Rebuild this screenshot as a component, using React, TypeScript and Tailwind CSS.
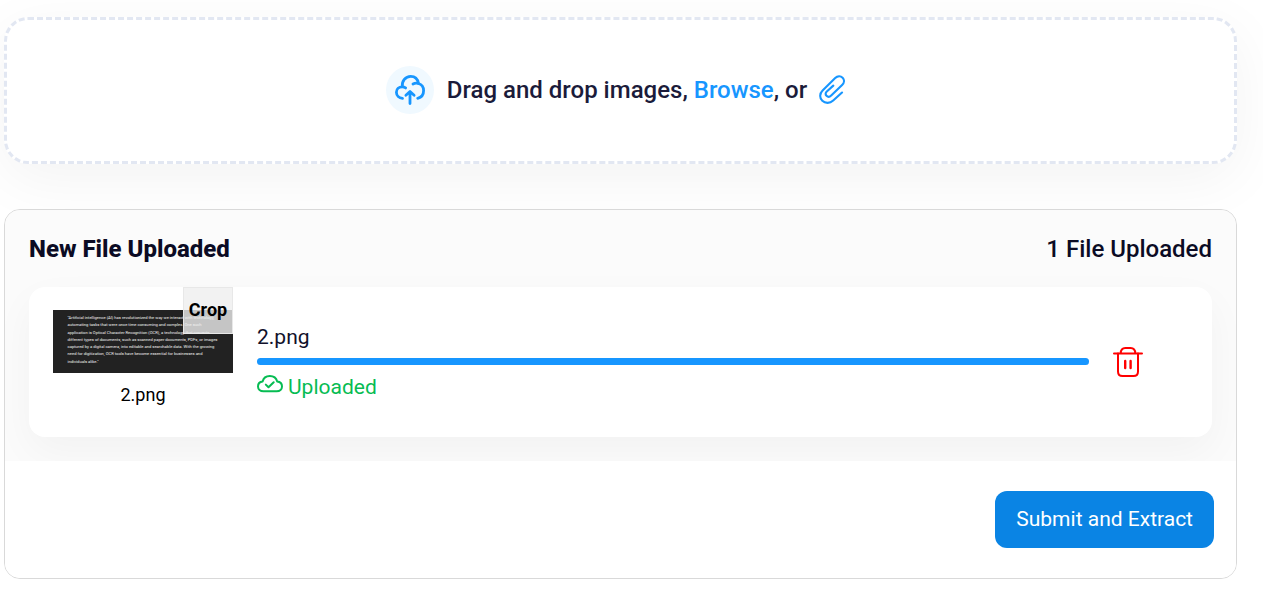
const files = [{ name: '2.png', progress: 100 }];

const thumbnailLines = [
  '"Artificial intelligence (AI) has revolutionized the way we interact with technology,',
  'automating tasks that were once time consuming and complex. One such',
  'application is Optical Character Recognition (OCR), a technology that converts',
  'different types of documents, such as scanned paper documents, PDFs, or images',
  'captured by a digital camera, into editable and searchable data. With the growing',
  'need for digitization, OCR tools have become essential for businesses and',
  'individuals alike."'
];

const CloudUploadIcon = () => (
  <svg viewBox="0 0 30 30" className="size-[30px]" fill="none" stroke="currentColor" strokeWidth="2.8" strokeLinecap="round" strokeLinejoin="round" aria-hidden="true">
    <path d="M7.5 23.3C4.2 23.1 1.4 20.7 1.4 17.3C1.4 14 4 11.9 7.2 11.9C8.5 11.9 9.7 12.3 10.6 12.9" />
    <path d="M7.3 11.7C6.7 6 10.5 1.4 15.7 1.4C19.8 1.4 22.7 4.2 23.4 8.3" />
    <path d="M18 9C19.5 8.2 21.4 7.9 23.4 8.5C26.7 9.5 28.6 12.2 28.6 15.5C28.6 19.6 26.2 22.5 22.7 23.3" />
    <path d="M15 28.6V16.8M10.9 20.2L15 16.5L19.1 20.2" />
  </svg>
);

const PaperclipIcon = () => (
  <svg viewBox="0 0 26 30" className="h-[30px] w-[26px]" fill="none" stroke="currentColor" strokeWidth="2.1" strokeLinecap="round" strokeLinejoin="round" aria-hidden="true">
    <path d="M23 17.5L14.2 25.6C10.8 28.7 6.2 28.6 3.3 25.8C0.4 22.9 0.5 18.6 3.6 15.5L16.2 3.1C18.5 0.9 21.6 0.8 23.6 2.7C25.6 4.8 25.4 7.8 23.1 10.1L12.2 20.6C10.8 21.9 8.8 22.1 7.5 20.8C6.2 19.5 6.4 17.8 7.8 16.5L14.3 10.6" />
  </svg>
);

const CloudCheckIcon = () => (
  <svg viewBox="0 0 26 18" className="h-[18px] w-[26px]" fill="none" stroke="currentColor" strokeWidth="2" strokeLinecap="round" strokeLinejoin="round" aria-hidden="true">
    <path d="M6.5 16.3C3.3 16.3 1 14.3 1 11.5C1 8.7 3 6.8 5.6 6.5C6.4 3.2 9.3 1 12.8 1C16.5 1 19.4 3.3 20.2 6.5C23 6.8 25 8.8 25 11.5C25 14.3 22.8 16.3 19.7 16.3Z" />
    <path d="M8.8 9.6L11.5 12.3L16.7 7.2" />
  </svg>
);

const TrashIcon = () => (
  <svg viewBox="0 0 30 30" className="size-[30px]" fill="none" stroke="currentColor" strokeWidth="2" strokeLinecap="round" strokeLinejoin="round" aria-hidden="true">
    <path d="M1 6.5H29M7.7 6.5C7.7 3 9.4 1 12.4 1H17.6C20.6 1 22.3 3 22.3 6.5" />
    <path d="M5 6.5V24.5C5 27.3 6.7 29 9.5 29H20.5C23.3 29 25 27.3 25 24.5V6.5" />
    <path d="M12.2 14V21M17.6 14V21" strokeWidth="2.4" />
  </svg>
);

const DropZone = () => (
  <section className="flex h-[147px] items-center justify-center rounded-3xl border-3 border-dashed border-[#e2e7f2] bg-white pr-[10px] pb-0.5 shadow-[0_15px_60px_rgba(0,0,0,0.05)]">
    <div className="mr-[13px] flex size-12 items-center justify-center rounded-full bg-[#f0f9ff] text-[#1796ff]">
      <CloudUploadIcon />
    </div>
    <p className="text-2xl font-medium text-[#1b1b3a]">
      Drag and drop images, <a href="#" className="text-[#1796ff]">Browse</a>, or
    </p>
    <button type="button" aria-label="Attach a link" className="ml-3 text-[#1796ff]">
      <PaperclipIcon />
    </button>
  </section>
);

const Thumbnail = ({ name }: { name: string }) => (
  <div className="w-[180px] shrink-0 pb-[5px] text-center">
    <svg viewBox="0 0 720 252" className="h-[63px] w-full bg-[#222222]" role="img" aria-label={name}>
      {thumbnailLines.map((line, i) => (
        <text key={line} x="58" y={36 + i * 29} fontSize="16.5" fill="#f2f2f2">
          {line}
        </text>
      ))}
    </svg>
    <p className="mt-2 text-lg text-black">{name}</p>
  </div>
);

const FileRow = ({ name, progress }: { name: string; progress: number }) => (
  <li className="relative flex items-center gap-6 rounded-2xl bg-white px-6 py-[23px] shadow-[0_15px_40px_rgba(0,0,0,0.04)]">
    <Thumbnail name={name} />
    <button type="button" className="absolute top-0 left-[154px] h-[47px] w-[50px] border border-[#e8e8e8] bg-[#efefef]/80 pb-0.5 text-lg font-bold text-black">
      Crop
    </button>
    <div className="min-w-0 flex-1">
      <p className="text-[21px] leading-7 text-[#11112b]">{name}</p>
      <div className="mt-[7px] mb-2 h-[7px] rounded-full bg-[#e2e7f2]" role="progressbar" aria-label={name} aria-valuenow={progress}>
        <div className="h-full rounded-full bg-[#1796ff]" style={{ width: `${progress}%` }} />
      </div>
      <p className="flex gap-[5px] text-[21px] leading-7 text-[#07bc53]">
        <span className="mt-0.5 leading-none"><CloudCheckIcon /></span>
        Uploaded
      </p>
    </div>
    <button type="button" aria-label={`Delete ${name}`} className="mr-[45px] text-[#ff0000]">
      <TrashIcon />
    </button>
  </li>
);

const App = () => (
  <main className="bg-white pt-[17px] pr-[26px] pb-4 pl-1 font-[Roboto,sans-serif]">
    <DropZone />
    <section className="mt-[45px] overflow-hidden rounded-2xl border border-[#d9d9d9]">
      <div className="bg-[#fafafa]/80 px-6 pt-[23px] pb-6">
        <div className="mb-[22px] flex items-center justify-between text-2xl text-[#0b0b24]">
          <h2 className="font-extrabold">New File Uploaded</h2>
          <p className="font-medium">{files.length} File Uploaded</p>
        </div>
        <ul>
          {files.map((file) => (
            <FileRow key={file.name} {...file} />
          ))}
        </ul>
      </div>
      <div className="relative flex justify-end bg-white px-[22px] py-[30px]">
        <button type="button" className="h-[57px] rounded-xl bg-[#0a84e4] px-[21px] pt-px text-[21px] text-white">
          Submit and Extract
        </button>
      </div>
    </section>
  </main>
);

export default App;
